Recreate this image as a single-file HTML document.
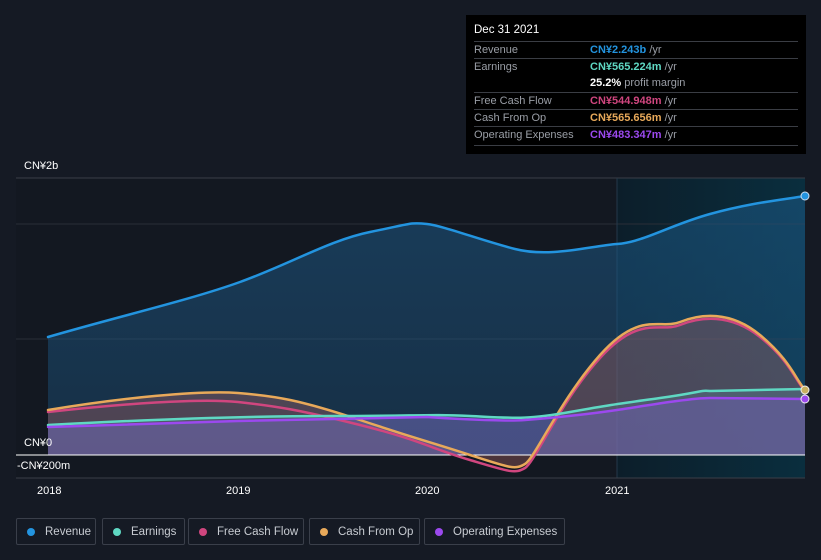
<!DOCTYPE html>
<html><head><meta charset="utf-8"><style>
body{margin:0;width:821px;height:560px;background:#151a24;font-family:"Liberation Sans",sans-serif;overflow:hidden;position:relative}
.tt{position:absolute;left:466px;top:15px;width:340px;height:139px;background:#000;color:#fff;font-size:11px}
.tt .h{position:absolute;left:8px;top:9px;font-size:11.5px}
.tt .r{position:absolute;left:8px;width:324px;border-top:1px solid #3a3d44;height:17px;line-height:17px;color:#9a9ea6}
.tt .r span{position:absolute;left:116px;font-weight:bold}
.tt .r i{font-style:normal;font-weight:normal;color:#9a9ea6}
.lg{position:absolute;top:518px;height:27px;border:1px solid #3a3f4a;border-radius:2px;color:#c8ccd2;font-size:11.5px;line-height:27px;box-sizing:border-box;padding-left:28px}
.lg b{position:absolute;left:10px;top:9px;width:8px;height:8px;border-radius:50%}
.ax{position:absolute;color:#fff;font-size:11px}
</style></head><body>
<svg width="821" height="560" style="position:absolute;left:0;top:0">
<defs>
<linearGradient id="hl" x1="0" x2="1"><stop offset="0" stop-color="#0c1e2a"/><stop offset="1" stop-color="#0a2e3e"/></linearGradient>
<linearGradient id="rv" x1="0" y1="0" x2="0" y2="1"><stop offset="0" stop-color="#1d5a88" stop-opacity=".55"/><stop offset="1" stop-color="#1d5a88" stop-opacity=".35"/></linearGradient>
</defs>
<rect x="16" y="178" width="601" height="300" fill="#131821"/>
<rect x="617" y="178" width="188" height="300" fill="url(#hl)"/>
<line x1="16" y1="178" x2="805" y2="178" stroke="#3a3e47"/>
<line x1="16" y1="224" x2="805" y2="224" stroke="#2a2e37"/>
<line x1="16" y1="339" x2="805" y2="339" stroke="#2a2e37"/>
<line x1="617" y1="178" x2="617" y2="478" stroke="#24384a"/>
<line x1="16" y1="478" x2="805" y2="478" stroke="#3a3e47"/>
<path d="M48,337 C120,316 190,300 240,282 S330,240 370,232 S410,222 427,224 S480,240 515,249 S590,246 617,244 S670,225 710,214 S780,200 805,196 L805,455 L48,455Z" fill="url(#rv)"/>
<path d="M48,410 C120,398 200,390 238,393 S300,400 360,420 S430,442 470,455 S515,470 525,464 S560,400 600,355 S660,330 680,322 S730,310 760,335 S795,378 805,390 L805,455 L48,455Z" fill="#b56a6a" fill-opacity=".35"/>
<path d="M48,425 C140,420 238,416 330,416 S427,414 470,416 S525,420 570,412 S617,404 660,398 S700,390 710,391 L805,389 L805,455 L48,455Z" fill="#5a8a9a" fill-opacity=".3"/>
<path d="M48,427 L238,421 L427,417 S500,422 525,420 S590,414 617,410 S690,398 710,398 L805,399 L805,455 L48,455Z" fill="#7a5ac8" fill-opacity=".35"/>
<line x1="16" y1="455" x2="805" y2="455" stroke="#fff" stroke-width="1"/>
<g fill="none" stroke-width="2.5" stroke-linecap="round">
<path d="M48,337 C120,316 190,300 240,282 S330,240 370,232 S410,222 427,224 S480,240 515,249 S590,246 617,244 S670,225 710,214 S780,200 805,196" stroke="#2394df"/>
<path d="M48,412 C120,404 200,398 238,402 S300,410 360,425 S430,448 470,460 S515,474 525,468 S560,402 600,358 S660,333 680,325 S730,313 760,337 S795,380 805,391" stroke="#d0467f"/>
<path d="M48,410 C120,398 200,390 238,393 S300,400 360,420 S430,442 470,455 S515,470 525,464 S560,400 600,355 S660,330 680,322 S730,310 760,335 S795,378 805,390" stroke="#e8a95a"/>
<path d="M48,425 C140,420 238,416 330,416 S427,414 470,416 S525,420 570,412 S617,404 660,398 S700,390 710,391 L805,389" stroke="#5fd8c3"/>
<path d="M48,427 L238,421 L427,417 S500,422 525,420 S590,414 617,410 S690,398 710,398 L805,399" stroke="#9b49ee"/>
</g>
<circle cx="805" cy="196" r="4" fill="#2394df" stroke="#cde" stroke-width="1"/>
<circle cx="805" cy="390" r="4" fill="#c8b060" stroke="#eee" stroke-width="1"/>
<circle cx="805" cy="399" r="4" fill="#9b49ee" stroke="#eee" stroke-width="1"/>
</svg>
<div class="ax" style="left:24px;top:160px">CN¥2b</div>
<div class="ax" style="left:24px;top:437px">CN¥0</div>
<div class="ax" style="left:17px;top:460px">-CN¥200m</div>
<div class="ax" style="left:37px;top:485px">2018</div>
<div class="ax" style="left:226px;top:485px">2019</div>
<div class="ax" style="left:415px;top:485px">2020</div>
<div class="ax" style="left:605px;top:485px">2021</div>
<div class="tt">
<div class="h">Dec 31 2021</div>
<div class="r" style="top:26px">Revenue<span style="color:#2394df">CN¥2.243b <i>/yr</i></span></div>
<div class="r" style="top:43px">Earnings<span style="color:#5fd8c3">CN¥565.224m <i>/yr</i></span></div>
<div class="r" style="top:60px;border-top:none"><span style="color:#fff">25.2% <i>profit margin</i></span></div>
<div class="r" style="top:77px">Free Cash Flow<span style="color:#d0467f">CN¥544.948m <i>/yr</i></span></div>
<div class="r" style="top:94px">Cash From Op<span style="color:#e8a95a">CN¥565.656m <i>/yr</i></span></div>
<div class="r" style="top:111px">Operating Expenses<span style="color:#9b49ee">CN¥483.347m <i>/yr</i></span></div>
<div class="r" style="top:130px;height:0"></div>
</div>
<div class="lg" style="left:16px;width:80px"><b style="background:#2394df"></b>Revenue</div>
<div class="lg" style="left:102px;width:83px"><b style="background:#5fd8c3"></b>Earnings</div>
<div class="lg" style="left:188px;width:116px"><b style="background:#d0467f"></b>Free Cash Flow</div>
<div class="lg" style="left:309px;width:111px"><b style="background:#e8a95a"></b>Cash From Op</div>
<div class="lg" style="left:424px;width:141px"><b style="background:#9b49ee"></b>Operating Expenses</div>
</body></html>
